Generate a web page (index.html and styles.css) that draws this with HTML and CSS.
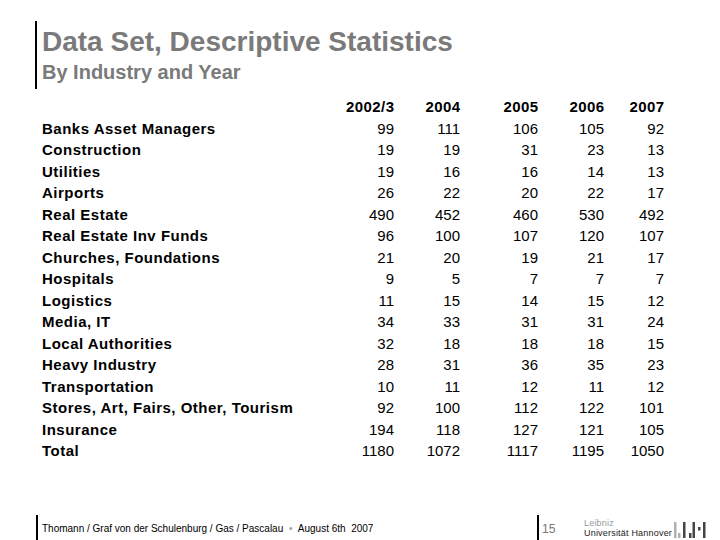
FILE: index.html
```html
<!DOCTYPE html>
<html>
<head>
<meta charset="utf-8">
<link rel="stylesheet" href="styles.css">
</head>
<body>
<div class="slide">
  <header class="head">
    <h1 class="title">Data Set, Descriptive Statistics</h1>
    <h2 class="subtitle">By Industry and Year</h2>
  </header>
  <div class="table">
    <div class="lbl"></div><div class="hd">2002/3</div><div class="hd">2004</div><div class="hd">2005</div><div class="hd">2006</div><div class="hd">2007</div>
    <div class="lbl">Banks Asset Managers</div><div class="n">99</div><div class="n">111</div><div class="n">106</div><div class="n">105</div><div class="n">92</div>
    <div class="lbl">Construction</div><div class="n">19</div><div class="n">19</div><div class="n">31</div><div class="n">23</div><div class="n">13</div>
    <div class="lbl">Utilities</div><div class="n">19</div><div class="n">16</div><div class="n">16</div><div class="n">14</div><div class="n">13</div>
    <div class="lbl">Airports</div><div class="n">26</div><div class="n">22</div><div class="n">20</div><div class="n">22</div><div class="n">17</div>
    <div class="lbl">Real Estate</div><div class="n">490</div><div class="n">452</div><div class="n">460</div><div class="n">530</div><div class="n">492</div>
    <div class="lbl">Real Estate Inv Funds</div><div class="n">96</div><div class="n">100</div><div class="n">107</div><div class="n">120</div><div class="n">107</div>
    <div class="lbl">Churches, Foundations</div><div class="n">21</div><div class="n">20</div><div class="n">19</div><div class="n">21</div><div class="n">17</div>
    <div class="lbl">Hospitals</div><div class="n">9</div><div class="n">5</div><div class="n">7</div><div class="n">7</div><div class="n">7</div>
    <div class="lbl">Logistics</div><div class="n">11</div><div class="n">15</div><div class="n">14</div><div class="n">15</div><div class="n">12</div>
    <div class="lbl">Media, IT</div><div class="n">34</div><div class="n">33</div><div class="n">31</div><div class="n">31</div><div class="n">24</div>
    <div class="lbl">Local Authorities</div><div class="n">32</div><div class="n">18</div><div class="n">18</div><div class="n">18</div><div class="n">15</div>
    <div class="lbl">Heavy Industry</div><div class="n">28</div><div class="n">31</div><div class="n">36</div><div class="n">35</div><div class="n">23</div>
    <div class="lbl">Transportation</div><div class="n">10</div><div class="n">11</div><div class="n">12</div><div class="n">11</div><div class="n">12</div>
    <div class="lbl">Stores, Art, Fairs, Other, Tourism</div><div class="n">92</div><div class="n">100</div><div class="n">112</div><div class="n">122</div><div class="n">101</div>
    <div class="lbl">Insurance</div><div class="n">194</div><div class="n">118</div><div class="n">127</div><div class="n">121</div><div class="n">105</div>
    <div class="lbl">Total</div><div class="n">1180</div><div class="n">1072</div><div class="n">1117</div><div class="n">1195</div><div class="n">1050</div>
  </div>
  <footer class="foot">
    <div class="foot-left">Thomann / Graf von der Schulenburg / Gas / Pascalau <span class="dot">&#8226;</span> August 6th&nbsp; 2007</div>
    <div class="page">15</div>
    <div class="logo">
      <div class="logo-text">
        <span class="leibniz">Leibniz</span>
        <span class="uni">Universität Hannover</span>
      </div>
      <svg class="luh" width="34" height="18" viewBox="0 0 34 18">
        <rect x="0" y="1" width="2.5" height="16" fill="#b0b0b0"/>
        <rect x="4" y="12" width="2.5" height="5" fill="#b0b0b0"/>
        <rect x="9" y="1" width="2.5" height="16" fill="#444"/>
        <rect x="15" y="12" width="2.5" height="5" fill="#444"/>
        <rect x="18.5" y="1" width="2.5" height="16" fill="#444"/>
        <rect x="24" y="6" width="2.5" height="3.5" fill="#444"/>
        <rect x="29" y="1" width="2.5" height="16" fill="#444"/>
      </svg>
    </div>
  </footer>
</div>
</body>
</html>
```

FILE: styles.css
```css
html, body {
  margin: 0;
  padding: 0;
  background: #ffffff;
}

.slide {
  width: 720px;
  height: 540px;
  display: flex;
  flex-direction: column;
  font-family: "Liberation Sans", Arial, sans-serif;
  color: #000;
}

.head {
  margin: 21px 0 0 35px;
  border-left: 2px solid #000;
  padding: 5px 0 5px 5px;
  height: 58px;
  box-sizing: content-box;
}

.title {
  margin: 0;
  font-size: 28px;
  line-height: 32px;
  font-weight: bold;
  color: #7a7a7a;
}

.subtitle {
  margin: 2px 0 0 0;
  font-size: 20px;
  line-height: 24px;
  font-weight: bold;
  color: #7a7a7a;
}

.table {
  margin: 7px 0 0 42px;
  display: grid;
  grid-template-columns: 288px 64px 66px 78px 66px 60px;
  grid-auto-rows: 21.5px;
  font-size: 15px;
  line-height: 21.5px;
}

.lbl {
  font-weight: bold;
  letter-spacing: 0.5px;
  white-space: nowrap;
}

.hd {
  font-weight: bold;
  letter-spacing: 0.4px;
  text-align: right;
  margin-right: -0.4px;
}

.n {
  text-align: right;
}

.foot {
  margin-top: auto;
  height: 25px;
  display: flex;
  align-items: stretch;
}

.foot-left {
  margin-left: 36px;
  width: 501px;
  border-left: 2px solid #000;
  padding-left: 4px;
  box-sizing: border-box;
  font-size: 10px;
  line-height: 10px;
  padding-top: 9px;
  color: #000;
  white-space: nowrap;
}

.dot {
  color: #999;
  margin: 0 3px;
}

.page {
  width: 47px;
  border-left: 2px solid #000;
  padding-left: 3px;
  padding-top: 8px;
  box-sizing: border-box;
  font-size: 12px;
  line-height: 12px;
  color: #777;
}

.logo {
  display: flex;
  align-items: flex-start;
  gap: 2px;
  padding-top: 4px;
}

.logo-text {
  display: flex;
  flex-direction: column;
  font-size: 9px;
  line-height: 9px;
  white-space: nowrap;
}

.leibniz {
  color: #999;
  letter-spacing: 0.2px;
}

.uni {
  color: #222;
  font-size: 9px;
  line-height: 11px;
  letter-spacing: 0.2px;
}

.luh {
  display: block;
  margin-top: 2px;
}
```
